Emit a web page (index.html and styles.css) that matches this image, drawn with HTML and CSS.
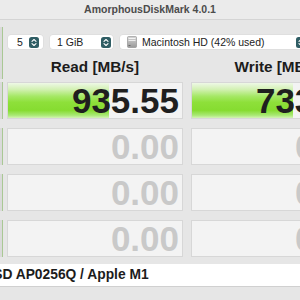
FILE: index.html
```html
<!DOCTYPE html>
<html>
<head>
<meta charset="utf-8">
<link rel="stylesheet" href="styles.css">
</head>
<body>
<div class="window">
  <div class="titlebar">AmorphousDiskMark 4.0.1</div>
  <div class="top">
    <div class="sliver sliver-all"></div>
    <div class="top-right">
      <div class="controls">
        <div class="select sel-count"><span class="sel-text">5</span><svg class="stepper" viewBox="0 0 10 11"><rect width="10" height="11" rx="2.5" fill="#2f5d64"/><path d="M3 4.3 L5 2.5 L7 4.3 M3 6.7 L5 8.5 L7 6.7" stroke="#fff" stroke-width="1.1" fill="none" stroke-linecap="round" stroke-linejoin="round"/></svg></div>
        <div class="select sel-size"><span class="sel-text">1 GiB</span><svg class="stepper" viewBox="0 0 10 11"><rect width="10" height="11" rx="2.5" fill="#2f5d64"/><path d="M3 4.3 L5 2.5 L7 4.3 M3 6.7 L5 8.5 L7 6.7" stroke="#fff" stroke-width="1.1" fill="none" stroke-linecap="round" stroke-linejoin="round"/></svg></div>
        <div class="select sel-disk"><svg class="disk" viewBox="0 0 10 12"><defs><linearGradient id="dg" x1="0" y1="0" x2="0" y2="1"><stop offset="0" stop-color="#d6d6d6"/><stop offset="1" stop-color="#9a9a9a"/></linearGradient></defs><rect x="0.5" y="0.5" width="9" height="11" rx="1" fill="url(#dg)" stroke="#8a8a8a" stroke-width="0.6"/><rect x="1.5" y="2" width="7" height="1" fill="#f2f2f2"/><rect x="1.5" y="4" width="7" height="1" fill="#eeeeee"/><rect x="1.5" y="9" width="2" height="1" fill="#6a6a6a"/></svg><span class="sel-text">Macintosh HD (42% used)</span><svg class="stepper" viewBox="0 0 10 11"><rect width="10" height="11" rx="2.5" fill="#2f5d64"/><path d="M3 4.3 L5 2.5 L7 4.3 M3 6.7 L5 8.5 L7 6.7" stroke="#fff" stroke-width="1.1" fill="none" stroke-linecap="round" stroke-linejoin="round"/></svg></div>
      </div>
      <div class="headers">
        <div class="head">Read [MB/s]</div>
        <div class="head">Write [MB/s]</div>
      </div>
    </div>
  </div>
  <div class="rows">
    <div class="row">
      <div class="sliver"></div>
      <div class="cell read active" style="background-size: 101px 100%;">935.55</div>
      <div class="cell write active" style="background-size: 101px 100%;">733.12</div>
    </div>
    <div class="row">
      <div class="sliver"></div>
      <div class="cell read">0.00</div>
      <div class="cell write">0.00</div>
    </div>
    <div class="row">
      <div class="sliver"></div>
      <div class="cell read">0.00</div>
      <div class="cell write">0.00</div>
    </div>
    <div class="row">
      <div class="sliver"></div>
      <div class="cell read">0.00</div>
      <div class="cell write">0.00</div>
    </div>
  </div>
  <div class="info">SSD AP0256Q / Apple M1</div>
</div>
</body>
</html>
```
FILE: styles.css
```css
html, body {
  margin: 0;
  padding: 0;
  width: 300px;
  height: 300px;
  overflow: hidden;
  background: #e6e6e6;
  font-family: "Liberation Sans", Arial, sans-serif;
}
.window {
  width: 300px;
  height: 300px;
  overflow: hidden;
  background: #e6e6e6;
}
.titlebar {
  height: 19px;
  line-height: 19px;
  border-bottom: 1px solid #d4d4d4;
  background: #ebebeb;
  text-align: center;
  font-weight: bold;
  font-size: 10.5px;
  color: #4c4c4c;
  white-space: nowrap;
}
.top {
  display: flex;
  padding-top: 7px;
}
.sliver {
  flex: 0 0 auto;
  width: 2px;
  margin-right: 4px;
  background: #dadada;
  border-right: 1px solid #a9c894;
}
.sliver-all {
  height: 52px;
}
.top-right {
  display: flex;
  flex-direction: column;
  padding-top: 8px;
}
.controls {
  display: flex;
  gap: 7px;
  margin-left: 1px;
  height: 14px;
}
.select {
  display: flex;
  align-items: center;
  background: #ffffff;
  border-radius: 3px;
  height: 14px;
  box-shadow: 0 0 0 0.5px #d8d8d8;
  font-size: 10.5px;
  color: #222;
  white-space: nowrap;
  flex: 0 0 auto;
}
.sel-text {
  flex: 1 1 auto;
}
.stepper {
  width: 10px;
  height: 11px;
  flex: 0 0 auto;
}
.sel-count {
  width: 35px;
  padding-left: 9px;
  padding-right: 4px;
  box-sizing: border-box;
}
.sel-size {
  width: 63px;
  padding-left: 7px;
  padding-right: 2px;
  box-sizing: border-box;
}
.sel-disk {
  width: 190px;
  padding-left: 7px;
  padding-right: 4px;
  box-sizing: border-box;
}
.disk {
  width: 10px;
  height: 12px;
  margin-right: 5px;
  flex: 0 0 auto;
}
.headers {
  display: flex;
  gap: 8px;
  height: 33px;
  box-sizing: border-box;
  padding-top: 8px;
}
.head {
  width: 176px;
  flex: 0 0 auto;
  text-align: center;
  font-weight: bold;
  font-size: 15.3px;
  line-height: 20px;
  color: #1c1c1c;
  white-space: nowrap;
}
.rows {
  display: flex;
  flex-direction: column;
  gap: 9px;
}
.row {
  display: flex;
  height: 37px;
}
.cell {
  flex: 0 0 auto;
  width: 176px;
  height: 37px;
  box-sizing: border-box;
  background-color: #f3f3f3;
  border: 1px solid #d7d7d7;
  text-align: right;
  padding-right: 3px;
  font-weight: bold;
  font-size: 35px;
  line-height: 35px;
  color: #c9c9c9;
  white-space: nowrap;
}
.read {
  margin-right: 8px;
}
.active {
  color: #1f1f1f;
  background-image: linear-gradient(to bottom, #eef8e6 0%, #d3f1b4 18%, #a5e865 38%, #8ee03a 55%, #86dc30 78%, #a8e874 92%, #d4f3b6 100%);
  background-repeat: no-repeat;
}
.info {
  margin-top: 7px;
  height: 22px;
  line-height: 22px;
  background: #ffffff;
  border-bottom: 1px solid #d0d0d0;
  font-weight: bold;
  font-size: 13.8px;
  color: #1c1c1c;
  white-space: nowrap;
  text-indent: -16px;
  overflow: hidden;
}
```
